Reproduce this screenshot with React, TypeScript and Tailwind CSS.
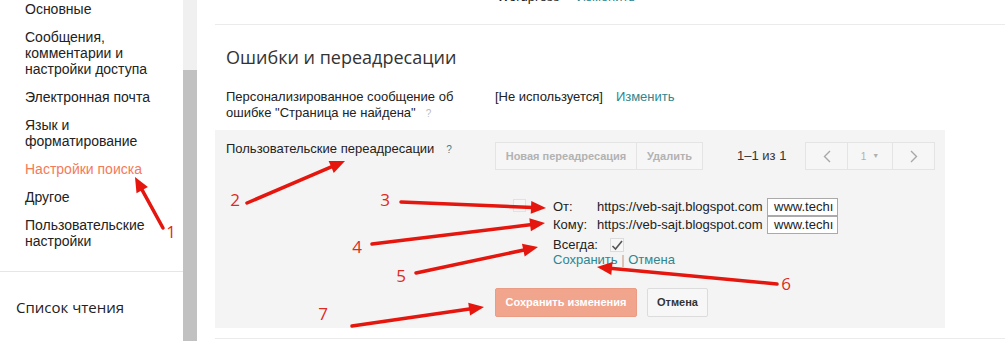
import React from 'react';

const RED = '#e5160e';
const LINK = 'text-[#2e8690]';

const sidebarItems: { lines: string[]; active?: boolean }[] = [
  { lines: ['Основные'] },
  { lines: ['Сообщения,', 'комментарии и', 'настройки доступа'] },
  { lines: ['Электронная почта'] },
  { lines: ['Язык и', 'форматирование'] },
  { lines: ['Настройки поиска'], active: true },
  { lines: ['Другое'] },
  { lines: ['Пользовательские', 'настройки'] },
];

// annotation arrows: tail -> head
const arrows = [
  { x1: 163, y1: 228, x2: 135, y2: 177 },
  { x1: 247, y1: 203, x2: 345, y2: 161 },
  { x1: 401, y1: 202, x2: 546, y2: 208 },
  { x1: 372, y1: 244, x2: 545, y2: 223 },
  { x1: 416, y1: 273, x2: 538, y2: 247 },
  { x1: 777, y1: 284, x2: 597, y2: 267 },
  { x1: 352, y1: 326, x2: 484, y2: 307 },
];

const numbers = [
  { n: '1', x: 171, y: 231 },
  { n: '2', x: 235, y: 199 },
  { n: '3', x: 385, y: 199 },
  { n: '4', x: 357, y: 246 },
  { n: '5', x: 401, y: 275 },
  { n: '6', x: 786, y: 283 },
  { n: '7', x: 323, y: 313 },
];

const Arrow = ({ x1, y1, x2, y2 }: { x1: number; y1: number; x2: number; y2: number }) => {
  const len = Math.hypot(x2 - x1, y2 - y1);
  const ux = (x2 - x1) / len;
  const uy = (y2 - y1) / len;
  const bx = x2 - ux * 15;
  const by = y2 - uy * 15;
  const px = -uy * 6.5;
  const py = ux * 6.5;
  return (
    <g>
      <line x1={x1} y1={y1} x2={bx + ux * 2} y2={by + uy * 2} stroke={RED} strokeWidth={3.5} strokeLinecap="round" />
      <polygon points={`${x2},${y2} ${bx + px},${by + py} ${bx - px},${by - py}`} fill={RED} />
    </g>
  );
};

const Annotations = () => (
  <svg className="absolute inset-0 pointer-events-none" width={1005} height={341}>
    {arrows.map((a, i) => (
      <Arrow key={i} {...a} />
    ))}
    {numbers.map((t) => (
      <text
        key={t.n}
        x={t.x}
        y={t.y}
        textAnchor="middle"
        dominantBaseline="central"
        fill="#dd2a22"
        fontSize={17}
        fontFamily="'Open Sans', sans-serif"
      >
        {t.n}
      </text>
    ))}
  </svg>
);

const Chevron = ({ dir }: { dir: 'left' | 'right' }) => (
  <svg width="8" height="13" viewBox="0 0 8 13">
    <path
      d={dir === 'left' ? 'M7 1 L1.5 6.5 L7 12' : 'M1 1 L6.5 6.5 L1 12'}
      fill="none"
      stroke="#a8a8a8"
      strokeWidth="1.4"
    />
  </svg>
);

export default function App() {
  return (
    <div className="relative w-[1005px] h-[341px] overflow-hidden bg-white flex font-['Liberation_Sans',Arial,sans-serif] text-[#222]">
      {/* sidebar */}
      <aside className="w-[183px] shrink-0 flex flex-col">
        <nav className="flex flex-col gap-[12px] pl-[25px] pt-[1px] text-[14px] leading-[16px]">
          {sidebarItems.map((item) => (
            <div key={item.lines[0]} className={item.active ? 'text-[#f47a58]' : 'text-[#222]'}>
              {item.lines.map((l, i) => (
                <div key={i}>{l}</div>
              ))}
            </div>
          ))}
        </nav>
        <div className="mt-[22px] border-t border-[#e6e6e6]" />
        <div className="mt-[25px] pl-[16px] text-[15px] leading-[20px] font-['Open_Sans',sans-serif] text-[#222]">
          Список чтения
        </div>
      </aside>

      {/* scrollbar */}
      <div className="w-[14px] shrink-0 flex flex-col">
        <div className="h-[70px] bg-[#f0f0f0]" />
        <div className="flex-1 bg-[#c1c1c1]" />
      </div>
      <div className="w-[18px] shrink-0" />

      {/* main */}
      <main className="flex-1 flex flex-col">
        <div className="h-[25px] border-b border-[#ebebeb] overflow-hidden">
          <div className="-mt-[11px] pl-[282px] flex gap-[17px] text-[13px] leading-[16px]">
            <span>Wordpress</span>
            <span className={LINK}>Изменить</span>
          </div>
        </div>

        <h2 className="mt-[19px] pl-[11px] text-[18px] leading-[26px] font-['Open_Sans',sans-serif] text-[#333]">
          Ошибки и переадресации
        </h2>

        <div className="mt-[19px] flex text-[13px] leading-[16px]">
          <div className="w-[280px] shrink-0 pl-[11px]">
            Персонализированное сообщение об
            <br />
            ошибке "Страница не найдена"
            <span className="ml-[10px] text-[10px] text-[#bbb]">?</span>
          </div>
          <div className="flex gap-[13px]">
            <span>[Не используется]</span>
            <span className={LINK}>Изменить</span>
          </div>
        </div>

        {/* redirects panel */}
        <section className="mt-[8px] w-[730px] bg-[#f4f4f4] pt-[11px] pb-[11px] text-[13px]">
          <div className="flex items-start">
            <div className="w-[280px] shrink-0 pl-[11px] leading-[16px]">
              Пользовательские переадресации
              <span className={`ml-[12px] text-[10px] ${LINK}`}>?</span>
            </div>
            <div className="flex flex-col">
              <div className="mt-[1px] flex items-center">
                <div className="flex h-[28px] text-[11px] font-bold text-[#b2b2b2]">
                  <div className="w-[142px] flex items-center justify-center bg-[#f6f6f6] border border-[#e4e4e4]">
                    Новая переадресация
                  </div>
                  <div className="w-[67px] -ml-px flex items-center justify-center bg-[#f6f6f6] border border-[#e4e4e4]">
                    Удалить
                  </div>
                </div>
                <span className="ml-[34px] w-[52px] text-[13px] text-[#333]">1–1 из 1</span>
                <div className="ml-[16px] flex h-[28px] bg-[#f6f6f6] border border-[#e4e4e4]">
                  <div className="w-[42px] flex items-center justify-center border-r border-[#e4e4e4]">
                    <Chevron dir="left" />
                  </div>
                  <div className="w-[45px] flex items-center justify-center gap-[6px] border-r border-[#e4e4e4] text-[10px] text-[#b0b0b0]">
                    <span>1</span>
                    <span className="text-[7px]">▼</span>
                  </div>
                  <div className="w-[41px] flex items-center justify-center">
                    <Chevron dir="right" />
                  </div>
                </div>
              </div>

              {/* redirect editor */}
              <div className="mt-[28px] ml-[18px] flex text-[13px]">
                <div className="w-[40px] shrink-0 pt-[1px]">
                  <div className="w-[13px] h-[13px] border border-[#e2e2e2] bg-[#f7f7f7]" />
                </div>
                <div className="flex flex-col">
                  <div className="flex items-center h-[18px]">
                    <span className="w-[44px]">От:</span>
                    <span className="w-[170px]">https://veb-sajt.blogspot.com</span>
                    <div className="w-[71px] h-[18px] border border-[#aaa] bg-white px-[6px] leading-[16px] overflow-hidden whitespace-nowrap">
                      www.techı
                    </div>
                  </div>
                  <div className="flex items-center h-[18px]">
                    <span className="w-[44px]">Кому:</span>
                    <span className="w-[170px]">https://veb-sajt.blogspot.com</span>
                    <div className="w-[71px] h-[18px] border border-[#aaa] bg-white px-[6px] leading-[16px] overflow-hidden whitespace-nowrap">
                      www.techı
                    </div>
                  </div>
                  <div className="mt-[3px] flex items-center h-[16px]">
                    <span className="w-[57px]">Всегда:</span>
                    <div className="w-[14px] h-[14px] border border-[#dcdcdc] bg-[#f7f7f7] flex items-center justify-center">
                      <svg width="12" height="11" viewBox="0 0 12 11">
                        <path d="M1.5 6 L4.5 9 L11 1" fill="none" stroke="#555" strokeWidth="1.6" />
                      </svg>
                    </div>
                  </div>
                  <div className="h-[14px] leading-[14px]">
                    <span className={LINK}>Сохранить</span>
                    <span className="text-[#aaa]"> | </span>
                    <span className={LINK}>Отмена</span>
                  </div>
                </div>
              </div>

              <div className="mt-[21px] flex gap-[10px] text-[11px] font-bold">
                <div className="w-[142px] h-[29px] flex items-center justify-center rounded-[2px] bg-[#f2a58d] border border-[#eb9c84] text-white">
                  Сохранить изменения
                </div>
                <div className="w-[61px] h-[29px] flex items-center justify-center rounded-[2px] bg-[#f7f7f7] border border-[#dcdcdc] text-[#333]">
                  Отмена
                </div>
              </div>
            </div>
          </div>
        </section>

        <div className="mt-[10px] border-t border-[#ebebeb]" />
      </main>

      <Annotations />
    </div>
  );
}
